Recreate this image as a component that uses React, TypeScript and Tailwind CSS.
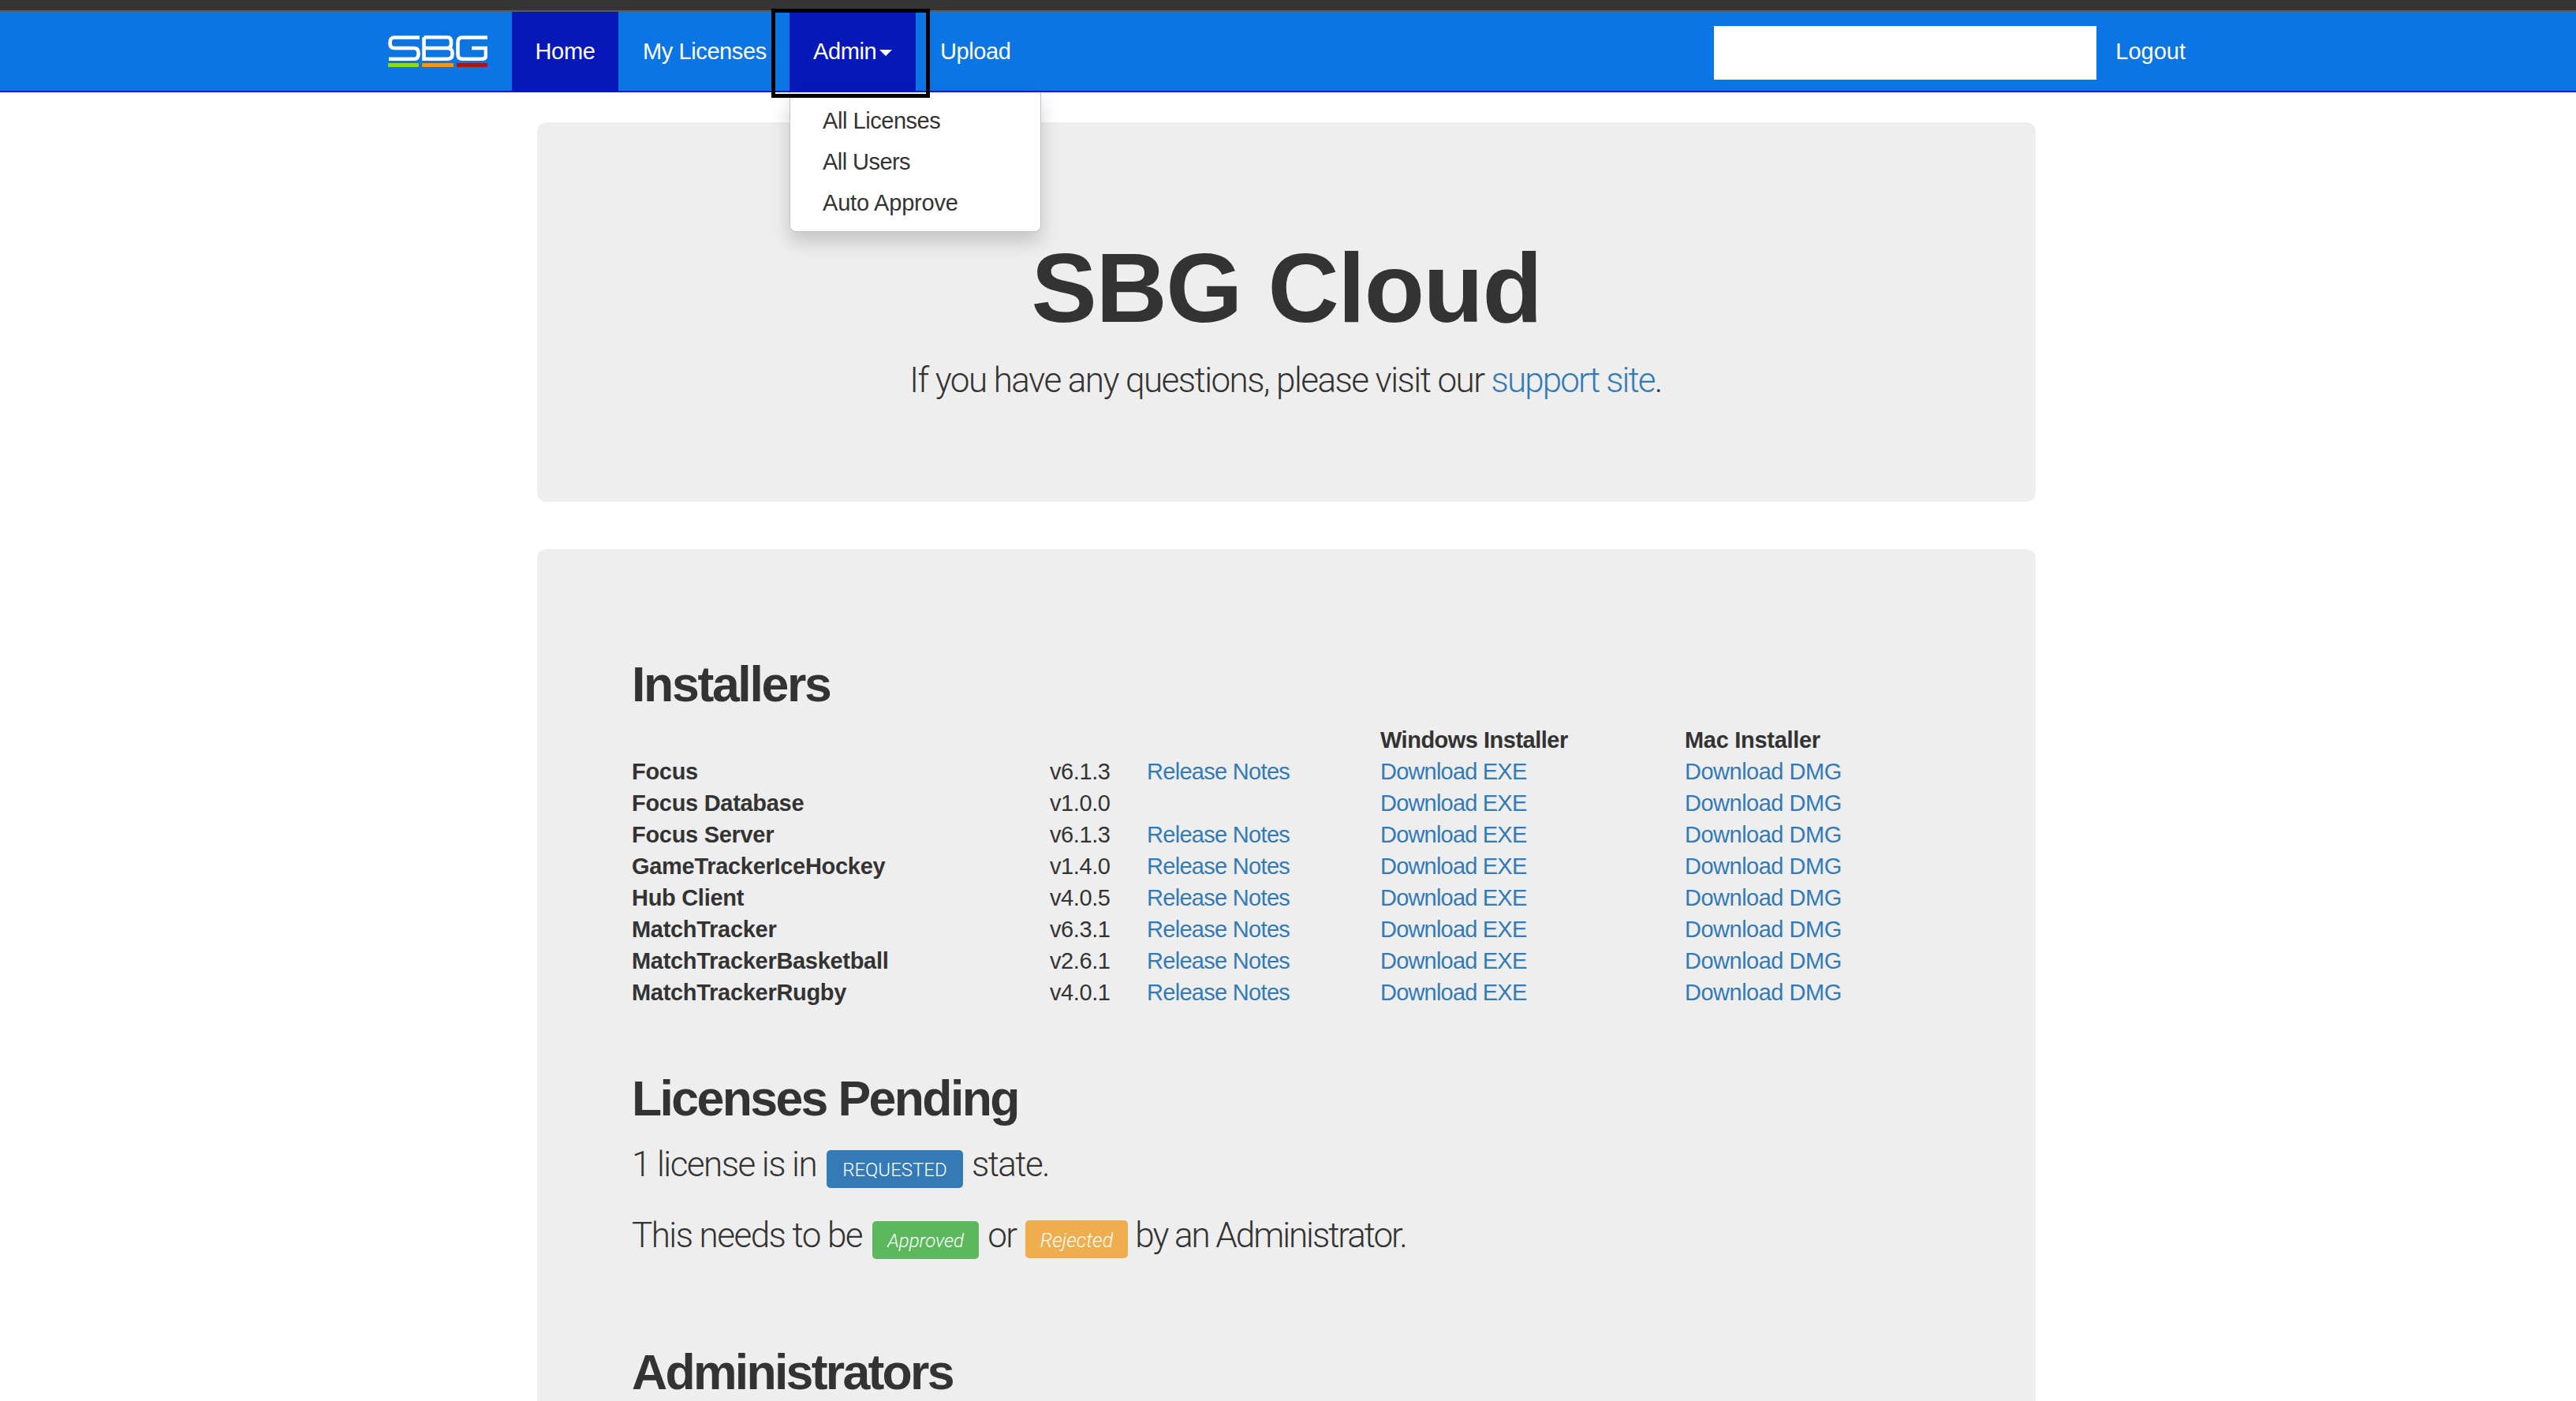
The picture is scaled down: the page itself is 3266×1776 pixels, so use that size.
import React from "react";

const rows: [string, string, boolean][] = [
  ["Focus", "v6.1.3", true],
  ["Focus Database", "v1.0.0", false],
  ["Focus Server", "v6.1.3", true],
  ["GameTrackerIceHockey", "v1.4.0", true],
  ["Hub Client", "v4.0.5", true],
  ["MatchTracker", "v6.3.1", true],
  ["MatchTrackerBasketball", "v2.6.1", true],
  ["MatchTrackerRugby", "v4.0.1", true],
];

function Logo() {
  return (
    <svg width="126" height="40" viewBox="0 0 126 40" fill="none" stroke="#fff" strokeWidth="4.6">
      <path d="M40 2.5H8Q2.5 2.5 2.5 9V10Q2.5 16 8 16H33Q38.5 16 38.5 22V23.5Q38.5 29.8 33 29.8H1" />
      <path d="M45.5 2.3H75Q80 2.3 80 8V10.5Q80 16 75 16H45.5M75 16Q81.5 16 81.5 22V24Q81.5 29.8 75 29.8H45.5V2.3" />
      <path d="M126 2.5H94Q88.5 2.5 88.5 9V23.5Q88.5 29.8 94 29.8H119Q124 29.8 124 25V16H106" />
      <rect x="0" y="35" width="39" height="5" rx="1" fill="#8ddc0e" stroke="none" />
      <rect x="43" y="35" width="40" height="5" rx="1" fill="#ee9912" stroke="none" />
      <rect x="87" y="35" width="39" height="5" rx="1" fill="#aa1616" stroke="none" />
    </svg>
  );
}

function H2({ children, className = "" }: { children: React.ReactNode; className?: string }) {
  return <h2 className={`text-[62.5px] leading-[69px] font-bold text-[#333] ${className}`}>{children}</h2>;
}

export default function App() {
  return (
    <div className="h-[1776px] overflow-hidden bg-white font-['Liberation_Sans',Arial,sans-serif] text-[29px] text-[#333]">
      <div className="h-[13px] bg-[#353535]" />
      <div className="h-[2px] bg-[#5a5a5a]" />
      <nav className="flex h-[102px] items-stretch border-b-2 border-[#0318c4] bg-[#0b75e3] pl-[492px] pr-[495px] text-white">
        <div className="flex w-[157px] items-center">
          <Logo />
        </div>
        <a className="flex w-[135px] items-center justify-center bg-[#0718b8] pt-[1px] tracking-[-0.3px]">Home</a>
        <a className="flex w-[217px] items-center whitespace-nowrap pl-[31px] pt-[1px] tracking-[-0.4px]">My Licenses</a>
        <div className="relative flex w-[160px] items-center bg-[#0718b8] pl-[30px] pt-[1px]">
          <span className="tracking-[-0.4px]">Admin</span>
          <span className="ml-[4px] mt-[3px] h-0 w-0 border-x-[8px] border-t-[8px] border-x-transparent border-t-white" />
          <div className="absolute -left-[23px] -top-[4px] z-20 h-[113px] w-[201px] border-[5px] border-black" />
          <div className="absolute left-0 top-[102px] z-10 w-[319px] rounded-b-[8px] border border-t-0 border-[#c4c4c4] bg-white py-[10px] pl-[41px] text-[#333] shadow-[0_12px_24px_rgba(0,0,0,0.18)]">
            <div className="leading-[52px] tracking-[-0.45px]">All Licenses</div>
            <div className="leading-[52px] tracking-[-0.55px]">All Users</div>
            <div className="leading-[52px] tracking-[-0.2px]">Auto Approve</div>
          </div>
        </div>
        <a className="flex items-center pl-[31px] pt-[1px] tracking-[-0.4px]">Upload</a>
        <div className="ml-auto flex items-center gap-[24px]">
          <div className="mt-[4px] h-[68px] w-[485px] bg-white" />
          <a className="pt-[1px]">Logout</a>
        </div>
      </nav>

      <main className="ml-[681px] w-[1900px]">
        <section className="mt-[38px] h-[481px] rounded-[12px] bg-[#eee] pt-[141px] text-center">
          <h1 className="text-[125px] leading-[137px] font-bold tracking-[-1.4px]">SBG Cloud</h1>
          <p className="mt-[18px] pr-[2px] font-['Roboto',sans-serif] text-[44px] leading-[62px] font-light tracking-[-1.55px]">
            If you have any questions, please visit our <a className="tracking-[-1.9px] text-[#337ab7]">support site</a>.
          </p>
        </section>

        <section className="mt-[60px] h-[1200px] rounded-t-[12px] bg-[#eee] pl-[120px] pt-[137px]">
          <H2 className="tracking-[-2.3px]">Installers</H2>
          <div className="mt-[16px] grid grid-cols-[530px_123px_296px_386px_1fr] leading-[40px] [&>*]:whitespace-nowrap">
            <div />
            <div />
            <div />
            <div className="font-bold tracking-[-0.5px]">Windows Installer</div>
            <div className="font-bold tracking-[-0.3px]">Mac Installer</div>
            {rows.map(([name, version, notes]) => (
              <React.Fragment key={name}>
                <div className="font-bold tracking-[-0.3px]">{name}</div>
                <div className="tracking-[-0.4px]">{version}</div>
                <div className="tracking-[-0.7px] text-[#337ab7]">{notes ? "Release Notes" : ""}</div>
                <div className="tracking-[-0.8px] text-[#337ab7]">Download EXE</div>
                <div className="tracking-[-0.5px] text-[#337ab7]">Download DMG</div>
              </React.Fragment>
            ))}
          </div>

          <H2 className="mt-[80px] tracking-[-2.6px]">Licenses Pending</H2>
          <div className="font-['Roboto',sans-serif] text-[44px] font-light tracking-[-1.55px]">
            <p className="mt-[18px] h-[62px] leading-[62px]">
              1 license is in{" "}
              <span className="ml-[4px] mr-[2px] inline-block h-[48px] rounded-[5px] bg-[#337ab7] px-[20px] align-baseline text-[24px] leading-[51px] tracking-[0px] text-white">REQUESTED</span>{" "}
              state.
            </p>
            <p className="mt-[28px] h-[62px] leading-[62px]">
              This needs to be{" "}
              <span className="ml-[4px] mr-[2px] inline-block h-[48px] rounded-[5px] bg-[#5cb85c] px-[19px] align-baseline text-[24px] leading-[51px] tracking-[0px] text-white italic">Approved</span>{" "}
              or{" "}
              <span className="ml-[2px] inline-block h-[48px] rounded-[5px] bg-[#f0ad4e] px-[19px] align-baseline text-[25px] leading-[51px] tracking-[0px] text-white italic">Rejected</span>{" "}
              <span className="tracking-[-2.05px]">by an Administrator.</span>
            </p>
          </div>
          <H2 className="mt-[108px] tracking-[-2.7px]">Administrators</H2>
        </section>
      </main>
    </div>
  );
}
